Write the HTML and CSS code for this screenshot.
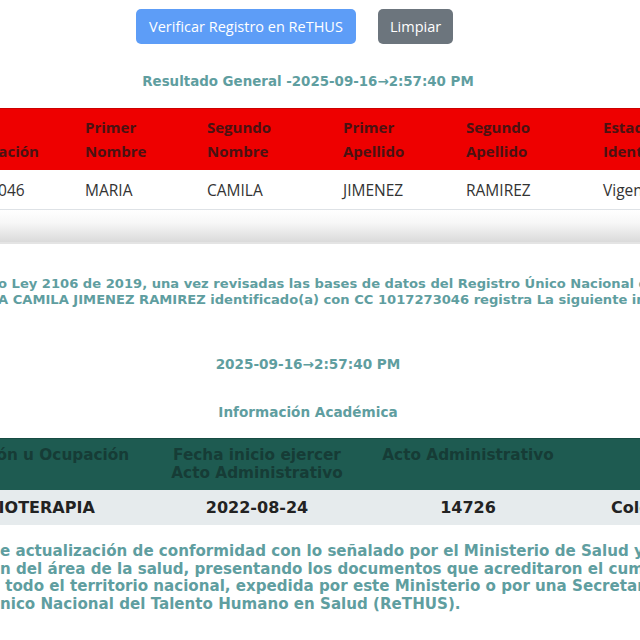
FILE: index.html
```html
<!DOCTYPE html>
<html lang="es">
  <head>
    <meta charset="UTF-8" />
    <meta name="viewport" content="width=device-width, initial-scale=1.0" />
    <title>Consulta ReTHUS</title>
    <link rel="stylesheet" href="styles.css">
  </head>
  <body>
    <div class="page">
      <div class="actions">
        <button class="btn btn-primary">Verificar Registro en ReTHUS</button>
        <button class="btn btn-secondary">Limpiar</button>
      </div>

      <h3 class="result-title">Resultado General -2025-09-16&rarr;2:57:40 PM</h3>

      <table class="persons">
        <colgroup>
          <col class="c-tipo" />
          <col class="c-id" />
          <col class="c-n1" />
          <col class="c-n2" />
          <col class="c-a1" />
          <col class="c-a2" />
          <col class="c-est" />
        </colgroup>
        <thead>
          <tr>
            <th>Tipo</th>
            <th>Identificación</th>
            <th>Primer Nombre</th>
            <th>Segundo Nombre</th>
            <th>Primer Apellido</th>
            <th>Segundo Apellido</th>
            <th>Estado Identificación</th>
          </tr>
        </thead>
        <tbody>
          <tr>
            <td>CC</td>
            <td>1017273046</td>
            <td>MARIA</td>
            <td>CAMILA</td>
            <td>JIMENEZ</td>
            <td>RAMIREZ</td>
            <td>Vigente</td>
          </tr>
        </tbody>
      </table>
      <div class="scroll-shade"></div>

      <p class="legal">
        o Ley 2106 de 2019, una vez revisadas las bases de datos del Registro Único Nacional del Talento Humano en Salud<br>
        A CAMILA JIMENEZ RAMIREZ identificado(a) con CC 1017273046 registra La siguiente información
      </p>

      <p class="stamp">2025-09-16&rarr;2:57:40 PM</p>

      <h4 class="section-title">Información Académica</h4>

      <table class="academic">
        <colgroup>
          <col class="c-tp" />
          <col class="c-prof" />
          <col class="c-fecha" />
          <col class="c-acto" />
          <col class="c-ent" />
        </colgroup>
        <thead>
          <tr>
            <th>Tipo Programa</th>
            <th>Profesión u Ocupación</th>
            <th>Fecha inicio ejercer<br>Acto Administrativo</th>
            <th>Acto Administrativo</th>
            <th class="th-ent">Entidad que reporta</th>
          </tr>
        </thead>
        <tbody>
          <tr>
            <td>UNIVERSITARIO</td>
            <td>FISIOTERAPIA</td>
            <td>2022-08-24</td>
            <td>14726</td>
            <td>Colegio Colombiano de Fisioterapeutas</td>
          </tr>
        </tbody>
      </table>

      <p class="notice">
        e actualización de conformidad con lo señalado por el Ministerio de Salud y Protección Social<br>
        n del área de la salud, presentando los documentos que acreditaron el cumplimiento<br>
        &nbsp;todo el territorio nacional, expedida por este Ministerio o por una Secretaría<br>
        nico Nacional del Talento Humano en Salud (ReTHUS).
      </p>
    </div>
  </body>
</html>
```

FILE: styles.css
```css
body {
  margin: 0;
  background: white;
  overflow: hidden;
  font-family: "DejaVu Sans", Verdana, sans-serif;
}

.page {
  width: 1000px;
  margin-left: -192px;
  padding-top: 9px;
}

.actions {
  display: flex;
  justify-content: center;
  gap: 22px;
  padding-right: 27px;
}

.btn {
  font-family: "Open Sans", sans-serif;
  font-size: 14.5px;
  color: white;
  border: none;
  border-radius: 5px;
  padding: 0 12px;
  height: 35px;
  cursor: pointer;
}

.btn-primary {
  background: #5d9df7;
  width: 220px;
}

.btn-secondary {
  background: #6c757d;
  width: 75px;
}

.result-title,
.stamp,
.section-title {
  color: #5f9ea0;
  font-size: 13.6px;
  font-weight: bold;
  text-align: center;
  line-height: 16px;
  margin: 0;
}

.result-title {
  font-size: 13.4px;
  margin-top: 30px;
  margin-bottom: 18px;
}

table {
  border-collapse: collapse;
  table-layout: fixed;
}

.persons {
  width: 1000px;
  font-family: "Open Sans", sans-serif;
  font-size: 15.5px;
  line-height: 24px;
  color: #333;
  border-top: 1px solid #cc0000;
}

.persons th {
  background: #ee0000;
  color: #4a1212;
  font-size: 15px;
  font-weight: 700;
  text-align: left;
  vertical-align: bottom;
  padding: 6px 8px 7px;
}

.persons td {
  padding: 8px 8px 7px;
  border-bottom: 1px solid #dee2e6;
  white-space: nowrap;
}

.c-tipo { width: 120px; }
.c-id { width: 149px; }
.c-n1 { width: 122px; }
.c-n2 { width: 136px; }
.c-a1 { width: 123px; }
.c-a2 { width: 137px; }
.c-est { width: 213px; }

.persons th:last-child {
  padding-right: 80px;
}

.scroll-shade {
  height: 32px;
  background: linear-gradient(#ffffff, #f7f7f7 40%, #dadada);
  border-bottom: 2px solid #e4e4e4;
}

.legal {
  color: #5f9ea0;
  font-size: 13.1px;
  font-weight: bold;
  line-height: 16px;
  white-space: nowrap;
  margin: 32px 0 48px 190px;
}

.section-title {
  margin-top: 32px;
  margin-bottom: 18px;
}

.academic {
  width: 1000px;
  border-top: 1px solid #174b43;
}

.c-tp { width: 112px; }
.c-prof { width: 225px; }
.c-fecha { width: 224px; }
.c-acto { width: 198px; }
.c-ent { width: 241px; }

.academic th {
  background: #1e5b51;
  color: #163c36;
  font-size: 15.3px;
  font-weight: bold;
  line-height: 18px;
  text-align: center;
  vertical-align: top;
  padding: 7px 8px 8px;
}

.academic .th-ent {
  text-align: left;
  padding-left: 120px;
}

.academic td {
  background: #e6ebed;
  color: #222;
  font-size: 16px;
  font-weight: bold;
  line-height: 19px;
  text-align: center;
  padding: 8px;
  white-space: nowrap;
}

.academic td:last-child {
  text-align: left;
  padding-left: 44px;
}

.notice {
  color: #5f9ea0;
  font-size: 15.1px;
  font-weight: bold;
  line-height: 17.7px;
  white-space: nowrap;
  margin: 18px 0 0 192px;
}
```
